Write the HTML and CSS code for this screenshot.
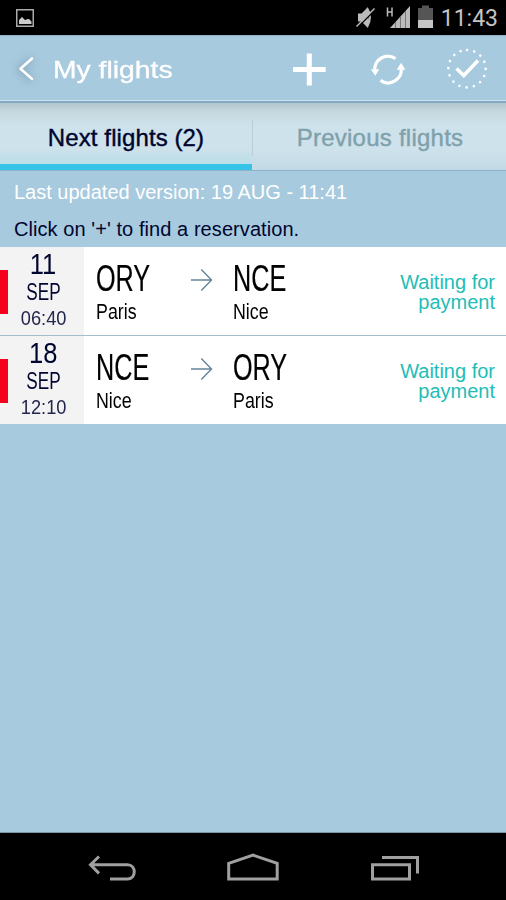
FILE: index.html
```html
<!DOCTYPE html>
<html lang="en">
<head>
    <meta charset="UTF-8">
    <meta name="viewport" content="width=device-width, initial-scale=1.0">
    <title>My flights</title>
    <link rel="stylesheet" href="styles.css">
</head>
<body>
    <div class="status-bar">
        <svg class="status-picture" width="18" height="18" viewBox="0 0 18 18">
            <rect x="0.75" y="0.75" width="16.5" height="16.5" fill="none" stroke="#aaa" stroke-width="1.5"/>
            <path d="M3 15v-4l3-3 3 3 3-1 1 0 2.500 2.500v2.500z" fill="#ccc"/>
        </svg>
        <div class="status-right">
            <svg width="78" height="26" viewBox="356 5 78 26">
                <path d="M358 13.500h3.500l6.500-6.500v21l-6.500-6.500h-3.500z" fill="#bbb"/>
                <path d="M367 8.500q5.500 8.500 0 18" fill="none" stroke="#bbb" stroke-width="2.500"/>
                <path d="M357.500 27.500l18-18" stroke="#000" stroke-width="1.500"/>
                <path d="M356.500 26.500l18-18" stroke="#bbb" stroke-width="1.500"/>
                <path d="M387.500 7.500v9M392 7.500v9M387.500 12h4.500" fill="none" stroke="#bbb" stroke-width="1.500"/>
                <path d="M390 28l20-22v22z" fill="#bbb"/>
                <path d="M395.500 22v6M400.500 17v11M405.500 11v17" stroke="#777" stroke-width="1"/>
                <path d="M418 8h4v-2.500h7v2.500h4v12h-15z" fill="#555"/>
                <path d="M418 20h15v8h-15z" fill="#c4c4c4"/>
            </svg>
            <span class="clock">11:43</span>
        </div>
    </div>

    <div class="header">
        <svg class="back" width="32" height="40" viewBox="10 48 32 40">
            <path d="M32 57.500L20.500 67.700 32 77.900" fill="none" stroke="#fff" stroke-width="2.600" stroke-linecap="round" stroke-linejoin="round"/>
        </svg>
        <h1>My flights</h1>
        <div class="actions">
            <svg width="34" height="34" viewBox="292 52 34 34">
                <path d="M309.300 53.500v32M293 69.500h32.700" stroke="#fff" stroke-width="5"/>
            </svg>
            <svg width="36" height="34" viewBox="368 52 36 34">
                <path d="M374.800 70.500A13.200 13.200 0 0 1 395.500 58.600M401.200 68A13.200 13.200 0 0 1 380.500 80.400" fill="none" stroke="#fff" stroke-width="3.200"/>
                <path d="M370.800 69.200h8.500l-4 6.500zM396.700 69.800h8.700l-4.300-7z" fill="#fff"/>
            </svg>
            <svg width="42" height="42" viewBox="446 48 42 42">
                <circle cx="467" cy="68.700" r="18.700" fill="none" stroke="#fff" stroke-width="2.600" stroke-linecap="round" stroke-dasharray="0.010 7.334" transform="rotate(-90 467 68.700)"/>
                <path d="M456.500 68.500l7.300 7L478 60.500" fill="none" stroke="#fff" stroke-width="3.600"/>
            </svg>
        </div>
    </div>

    <div class="tabs">
        <div class="tab active"><span>Next flights (2)</span></div>
        <div class="tab"><span>Previous flights</span></div>
    </div>

    <p class="updated">Last updated version: 19 AUG - 11:41</p>
    <p class="hint">Click on '+' to find a reservation.</p>

    <div class="flights">
        <div class="flight">
            <div class="marker"></div>
            <div class="date">
                <span class="day">11</span>
                <span class="month">SEP</span>
                <span class="time">06:40</span>
            </div>
            <div class="airport from">
                <span class="code">ORY</span>
                <span class="city">Paris</span>
            </div>
            <svg class="arrow" width="22" height="22" viewBox="0 0 22 22">
                <path d="M0 11h20.500M10.300 0.500L20.500 11 10.300 21.500"/>
            </svg>
            <div class="airport to">
                <span class="code">NCE</span>
                <span class="city">Nice</span>
            </div>
            <div class="state">Waiting for<br>payment</div>
        </div>
        <div class="flight">
            <div class="marker"></div>
            <div class="date">
                <span class="day">18</span>
                <span class="month">SEP</span>
                <span class="time">12:10</span>
            </div>
            <div class="airport from">
                <span class="code">NCE</span>
                <span class="city">Nice</span>
            </div>
            <svg class="arrow" width="22" height="22" viewBox="0 0 22 22">
                <path d="M0 11h20.500M10.300 0.500L20.500 11 10.300 21.500"/>
            </svg>
            <div class="airport to">
                <span class="code">ORY</span>
                <span class="city">Paris</span>
            </div>
            <div class="state">Waiting for<br>payment</div>
        </div>
    </div>

    <div class="nav-bar">
        <svg width="48" height="30" viewBox="88 853 48 30">
            <path d="M91 864.700h36.500c9 0 9 14.300 0 14.300H110M99 856.500l-8.500 8.200 8.500 8.700" fill="none" stroke="#a0a0a0" stroke-width="3"/>
        </svg>
        <svg width="54" height="30" viewBox="226 853 54 30">
            <path d="M228.700 863.300L253 855.200l24.200 8.100V879h-48.500z" fill="none" stroke="#a0a0a0" stroke-width="3"/>
        </svg>
        <svg width="50" height="30" viewBox="370 853 50 30">
            <path d="M372.500 864.700h37V879h-37zM382 857.500h35.500v16" fill="none" stroke="#a0a0a0" stroke-width="3"/>
        </svg>
    </div>
</body>
</html>
```
FILE: styles.css
```css
* {
    box-sizing: border-box;
}

body {
    font-family: "Liberation Sans", Arial, sans-serif;
    margin: 0;
    height: 900px;
    background: #a7cade;
    display: flex;
    flex-direction: column;
    overflow: hidden;
}

svg {
    display: block;
    flex: none;
    overflow: visible;
}

.status-bar {
    height: 35px;
    background: #000;
    display: flex;
    align-items: center;
    justify-content: space-between;
    padding: 0 8px 0 16px;
}

.status-right {
    display: flex;
    align-items: center;
    gap: 7px;
}

.clock {
    font-family: Roboto, sans-serif;
    font-size: 23px;
    line-height: 35px;
    color: #c4c4c4;
    padding-top: 2px;
}

.header {
    height: 68px;
    display: flex;
    align-items: center;
    padding: 0 18px 0 10px;
    border-top: 1px solid #8fb0c4;
    border-bottom: 2px solid #82a9c4;
    box-shadow: inset 0 -1px 0 #cde2ee;
}

.back {
    filter: drop-shadow(-1px 1px 4px rgba(60, 90, 120, 0.6));
}

h1 {
    margin: 2px 0 0 11px;
    font-size: 24px;
    font-weight: normal;
    line-height: 30px;
    color: #fff;
    white-space: nowrap;
    transform: scaleX(1.18);
    transform-origin: left;
    -webkit-text-stroke: 0.3px #fff;
}

.actions {
    margin-left: auto;
    display: flex;
    align-items: center;
    gap: 42px;
}

.tabs {
    height: 68px;
    display: flex;
    background: linear-gradient(#b2c5cd 0, #c4d7df 8px, #cee2eb 22px, #cee2eb 46px, #c2d9e5 67px);
    border-bottom: 1px solid #8db3cc;
}

.tab {
    flex: 1;
    display: flex;
    align-items: center;
    justify-content: center;
    padding-left: 2px;
    font-size: 24px;
    color: #7fa1ab;
    letter-spacing: 0.25px;
    -webkit-text-stroke: 0.4px #7fa1ab;
    background: linear-gradient(#b9ced8, #b9ced8) left 17px / 1px 36px no-repeat;
}

.tab span {
    padding-top: 3px;
}

.tab.active {
    flex: 0 0 252px;
    padding-left: 0;
    color: #00052f;
    letter-spacing: 0.1px;
    -webkit-text-stroke-color: #00052f;
    background: linear-gradient(transparent 46px, #bae0ea 64px);
    border-bottom: 6px solid #36c3e8;
}

.tab.active span {
    padding-top: 9px;
}

.updated,
.hint {
    margin: 0;
    padding-left: 14px;
    font-size: 20px;
    white-space: nowrap;
}

.updated {
    color: #fff;
    height: 39px;
    line-height: 42px;
}

.hint {
    color: #00052f;
    height: 37px;
    line-height: 38px;
    letter-spacing: 0.07px;
}

.flight {
    height: 88px;
    display: flex;
    background: #fff;
}

.flight + .flight {
    height: 89px;
    border-top: 1px solid #a3bdca;
}

.marker {
    width: 8px;
    background: linear-gradient(#f5001d, #f5001d) 0 23px / 8px 44px no-repeat #f3f3f3;
}

.date {
    width: 76px;
    padding-right: 5px;
    background: #f3f3f3;
    color: #00052f;
    display: flex;
    flex-direction: column;
    align-items: center;
}

.day {
    font-size: 29px;
    line-height: 34px;
    transform: scaleX(0.88);
}

.month {
    font-size: 23.5px;
    line-height: 22px;
    transform: scaleX(0.73);
}

.time {
    font-size: 20.5px;
    line-height: 29px;
    color: #23274c;
    transform: scaleX(0.89);
}

.airport {
    display: flex;
    flex-direction: column;
    align-items: flex-start;
    color: #000;
}

.airport span {
    transform-origin: left;
}

.from {
    width: 107px;
    padding-left: 12px;
}

.to {
    width: 120px;
    padding-left: 20px;
}

.code {
    font-size: 36px;
    line-height: 40px;
    margin-top: 12px;
    transform: scaleX(0.7);
    -webkit-text-stroke: 0.2px #000;
}

.city {
    font-size: 22px;
    line-height: 26px;
    transform: scaleX(0.81);
}

.arrow {
    margin-top: 22px;
    fill: none;
    stroke: #648499;
    stroke-width: 1.4;
}

.state {
    margin-left: auto;
    padding: 25px 11px 0 0;
    font-size: 20px;
    line-height: 20px;
    text-align: right;
    color: #23bdb8;
    white-space: nowrap;
}

.nav-bar {
    height: 68px;
    margin-top: auto;
    padding: 20px 86px 0 88px;
    background: #000;
    border-top: 1px solid #7795a5;
    display: flex;
    justify-content: space-between;
}
```
